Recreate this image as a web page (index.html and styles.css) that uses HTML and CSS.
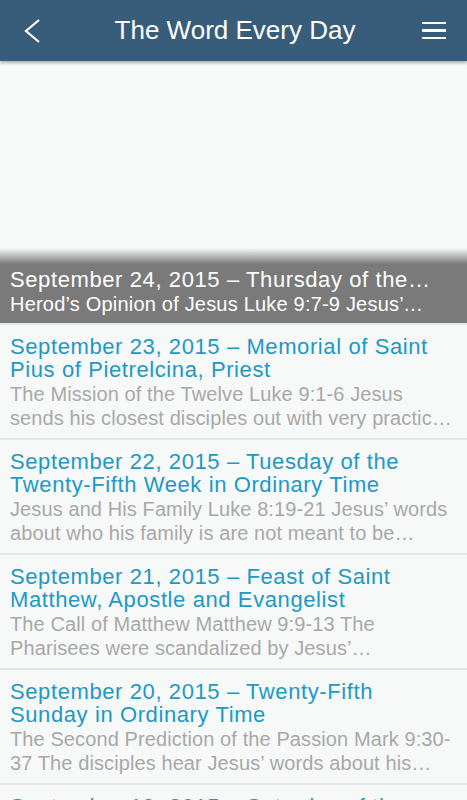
FILE: index.html
```html
<!DOCTYPE html>
<html lang="en">
<head>
    <meta charset="UTF-8">
    <meta name="viewport" content="width=device-width, initial-scale=1.0">
    <title>The Word Every Day</title>
    <link rel="stylesheet" href="styles.css">
</head>
<body>
    <header class="top-bar">
        <button class="icon-btn back-btn" aria-label="Back">
            <svg width="18" height="26" viewBox="0 0 18 26">
                <polyline points="15,2 2,13 15,24" fill="none" stroke="#fff" stroke-width="2.2"/>
            </svg>
        </button>
        <h1>The Word Every Day</h1>
        <button class="icon-btn menu-btn" aria-label="Menu">
            <span></span><span></span><span></span>
        </button>
    </header>

    <main class="content">
        <div class="featured">
            <div class="featured-caption">
                <p class="featured-title">September 24, 2015 – Thursday of the Twenty-Fifth Week in Ordinary Time</p>
                <p class="featured-text">Herod’s Opinion of Jesus Luke 9:7-9 Jesus’ reputation is growing</p>
            </div>
        </div>

        <ul class="posts">
            <li class="post">
                <h2>September 23, 2015 – Memorial of Saint Pius of Pietrelcina, Priest</h2>
                <p>The Mission of the Twelve Luke 9:1-6 Jesus sends his closest disciples out with very practical instructions</p>
            </li>
            <li class="post">
                <h2>September 22, 2015 – Tuesday of the Twenty-Fifth Week in Ordinary Time</h2>
                <p>Jesus and His Family Luke 8:19-21 Jesus’ words about who his family is are not meant to be…</p>
            </li>
            <li class="post">
                <h2>September 21, 2015 – Feast of Saint Matthew, Apostle and Evangelist</h2>
                <p>The Call of Matthew Matthew 9:9-13 The Pharisees were scandalized by Jesus’…</p>
            </li>
            <li class="post">
                <h2>September 20, 2015 – Twenty-Fifth Sunday in Ordinary Time</h2>
                <p>The Second Prediction of the Passion Mark 9:30-<wbr>37 The disciples hear Jesus’ words about his coming death</p>
            </li>
            <li class="post">
                <h2>September 19, 2015 – Saturday of the Twenty-Fourth Week in Ordinary Time</h2>
                <p>The Parable of the Sower Luke 8:4-15 Jesus explains the parable to his disciples</p>
            </li>
        </ul>
    </main>
</body>
</html>
```
FILE: styles.css
```css
* {
    box-sizing: border-box;
    margin: 0;
    padding: 0;
}

body {
    font-family: 'Liberation Sans', Arial, sans-serif;
    background-color: #f7f9f9;
    width: 467px;
    height: 800px;
    overflow: hidden;
}

.top-bar {
    position: relative;
    z-index: 2;
    height: 61px;
    background-color: #375d7a;
    display: flex;
    align-items: center;
    justify-content: space-between;
    padding: 0 21px 0 24px;
    box-shadow: 0 2px 3px rgba(0, 0, 0, 0.3);
}

.top-bar h1 {
    color: #fff;
    font-size: 26px;
    font-weight: normal;
    margin-left: 6px;
}

.icon-btn {
    background: none;
    border: none;
    height: 26px;
    display: flex;
    align-items: center;
    justify-content: center;
}

.back-btn {
    width: 18px;
}

.menu-btn {
    width: 24px;
    flex-direction: column;
    gap: 5px;
}

.menu-btn span {
    display: block;
    width: 24px;
    height: 2.5px;
    background-color: #fff;
}

.featured {
    height: 264px;
    display: flex;
    flex-direction: column;
    justify-content: flex-end;
    border-bottom: 2px solid #e4e6e6;
}

.featured-caption {
    background: linear-gradient(to bottom, rgba(122, 122, 122, 0) 0, #7a7a7a 16px);
    padding: 19px 36px 7px 10px;
    color: #fff;
}

.featured-caption p {
    white-space: nowrap;
    overflow: hidden;
    text-overflow: ellipsis;
}

.featured-title {
    font-size: 22px;
    line-height: 25px;
    letter-spacing: 0.6px;
}

.featured-text {
    margin-right: 6px;
    font-size: 20px;
    line-height: 24px;
    letter-spacing: 0.2px;
}

.posts {
    list-style: none;
}

.post {
    height: 115px;
    padding: 10px 10px 0;
    border-bottom: 2px solid #e4e6e6;
}

.post h2 {
    font-size: 22px;
    font-weight: normal;
    line-height: 23px;
    letter-spacing: 0.6px;
    color: #1e98c4;
}

.post p {
    margin-top: 1px;
    font-size: 20px;
    line-height: 24px;
    letter-spacing: 0.1px;
    color: #a8a8a8;
    display: -webkit-box;
    -webkit-line-clamp: 2;
    -webkit-box-orient: vertical;
    overflow: hidden;
}
```
